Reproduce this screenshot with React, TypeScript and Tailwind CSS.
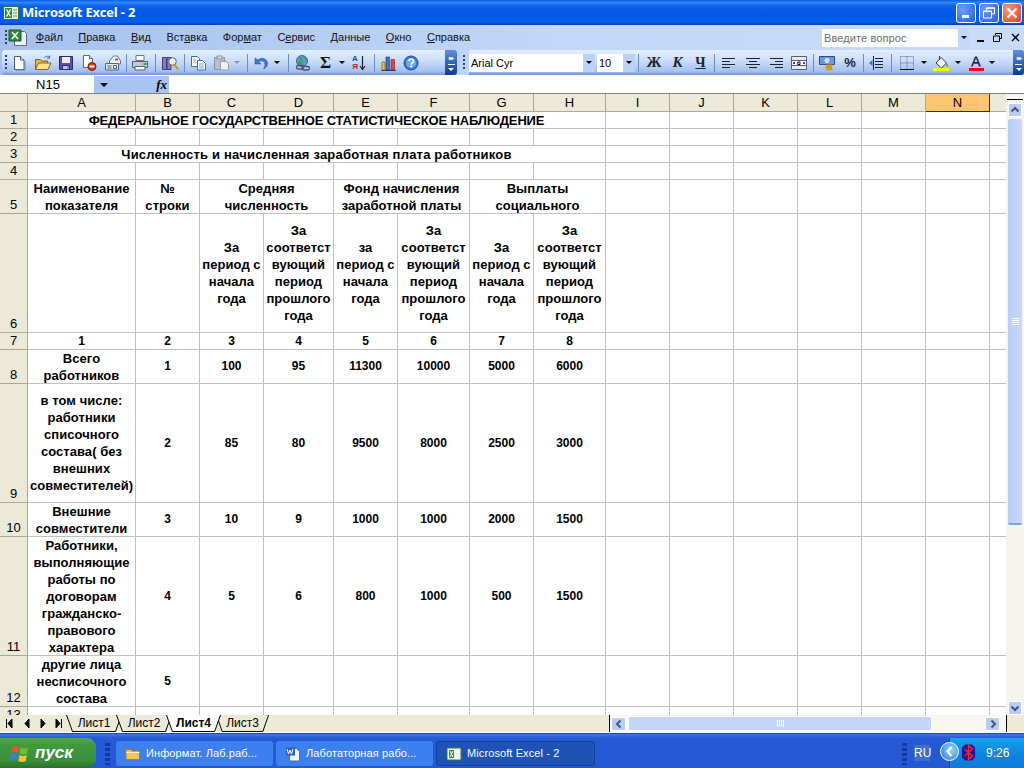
import type { ReactNode } from 'react';

const S = ({ children, w = 16 }: { children: ReactNode; w?: number }) => (
    <svg width={w} height="16" viewBox={`0 0 ${w} 16`} className="block shrink-0">{children}</svg>
);

const icons: Record<string, ReactNode> = {
    new: <S><path d="M3.500 1.500h6l3.500 3.500v9.500h-9.500z" fill="#fff" stroke="#4a5a78" /><path d="M9.500 1.500v3.500h3.500" fill="#dde6f5" stroke="#4a5a78" /><path d="M14 6v9H5" fill="none" stroke="#6f86b3" /></S>,
    open: <S w={18}><path d="M1.500 14.500v-10h5l1 1.500h6v8.500z" fill="#e8b74a" stroke="#8a6414" /><path d="M1.500 14.500l3-6.500h12.500l-3 6.500z" fill="#ffe08a" stroke="#8a6414" /><path d="M10 3c2-2.500 4-2 5.500-.5M15.500 .5v2.500h-2.500" fill="none" stroke="#3f6fb5" /></S>,
    save: <S><path d="M1.500 1.500h13v13h-13z" fill="#5a4fb0" stroke="#2a2870" /><path d="M4 2h8v6h-8z" fill="#e9ecf7" /><path d="M4.500 10.500h7v4h-7z" fill="#c6c9d8" stroke="#2a2870" /><path d="M9.500 11.500h1v2h-1z" fill="#2a2870" /></S>,
    perm: <S><path d="M2.500 .5h6l3 3v9h-9z" fill="#fff" stroke="#5a6a86" /><path d="M8.500 .5v3h3" fill="#dde6f5" stroke="#5a6a86" /><circle cx="11" cy="11.500" r="4" fill="#d8341c" stroke="#8a1a0c" /><path d="M8.500 10.500h5v2h-5z" fill="#fff" /></S>,
    mail: <S w={18}><path d="M5.500 6l4-5h4l3 5v3h-11z" fill="#eef1f7" stroke="#6a7488" /><path d="M11 3.500h3v2h-3z" fill="#d04a3a" /><path d="M1.500 8.500h13v6.500h-13z" fill="#dfe5ee" stroke="#5a6478" /><path d="M3.500 11h4M3.500 13h4M9.500 10.500h3v3h-3z" fill="none" stroke="#5a6478" /></S>,
    print: <S w={18}><path d="M5 .5h8v5h-8z" fill="#fff" stroke="#6a7488" /><path d="M1.500 6.500h15v6h-15z" fill="#c3c9d3" stroke="#5a6070" /><path d="M4 11.500h10v3.500h-10z" fill="#f4f5f7" stroke="#5a6070" /><path d="M12.500 8h3v2h-3z" fill="#26b04a" /></S>,
    research: <S w={18}><path d="M1.500 2.500h4v12h-4zM6 2.500h4v12h-4z" fill="#8a78c0" stroke="#453a7a" /><circle cx="11.500" cy="6.500" r="3.800" fill="#e7f3ff" stroke="#7a6a30" /><path d="M13.500 9.500l3.500 5" stroke="#c49420" strokeWidth="2" /></S>,
    copy: <S w={17}><path d="M1.500 1.500h6l2 2v8h-8z" fill="#fff" stroke="#3d6fb4" /><path d="M7.500 5.500h5l3 3v6.500h-8z" fill="#fff" stroke="#3d6fb4" /><path d="M9 9h5M9 11h5M9 13h5M3 5h3M3 7h3" stroke="#7ba3d8" /></S>,
    paste: <S w={17}><path d="M1.500 2.500h10v12h-10z" fill="#b9bfca" stroke="#8d94a3" /><path d="M4 1h5v3h-5z" fill="#d9dde4" stroke="#8d94a3" /><path d="M7.500 6.500h6l2 2v6.500h-8z" fill="#eef0f4" stroke="#9aa1ae" /></S>,
    undo: <S><path d="M2 3v6h6l-2.200-2.200c2.500-2 6-.8 6.200 3 .1 1.500-.6 3-1.500 4 3-1 4.500-3.300 4-6.300-.7-3.800-5.800-5.800-9.500-2.600z" fill="#3f78d4" stroke="#1e4a9a" strokeWidth=".5" /></S>,
    link: <S w={18}><circle cx="8" cy="6" r="5.500" fill="#5b9bd8" stroke="#35659c" /><path d="M5 3c2-1 3 1 2 2.500s-3 1-3 3c2 1 4 0 5-2M9 1.500c1 2 3 2 3.500 3.500" fill="#4fa84a" stroke="#3f8a3c" /><rect x="2.500" y="10.500" width="7" height="3.500" rx="1.700" fill="none" stroke="#4a5470" strokeWidth="1.300" /><rect x="8" y="11.500" width="7.500" height="3.500" rx="1.700" fill="none" stroke="#4a5470" strokeWidth="1.300" /></S>,
    chart: <S w={17}><path d="M1.500 15.500h14.500" stroke="#2a3a6a" /><path d="M2 7h3v8h-3z" fill="#f1c232" stroke="#6a5210" strokeWidth=".6" /><path d="M6 2h3.500v13h-3.500z" fill="#3f6fd1" stroke="#1a327a" strokeWidth=".6" /><path d="M11 4.500h3.500v10.500h-3.500z" fill="#e0453a" stroke="#7a1a12" strokeWidth=".6" /></S>,
    help: <S><circle cx="8" cy="8" r="7" fill="#3a76d6" stroke="#1f4a9c" /><circle cx="8" cy="8" r="5" fill="#6ea6ee" /><path d="M5.800 6.200c.3-2.600 4.700-2.600 4.700 0 0 1.800-2.300 1.600-2.300 3.300" fill="none" stroke="#fff" strokeWidth="1.700" /><path d="M7.300 10.500h1.900v1.800h-1.900z" fill="#fff" /></S>,
    left: <S><path d="M1 3.500h13M1 6.500h8M1 9.500h13M1 12.500h8" stroke="#1c2433" /></S>,
    center: <S><path d="M1 3.500h14M4 6.500h8M1 9.500h14M4 12.500h8" stroke="#1c2433" /></S>,
    right: <S><path d="M2 3.500h13M7 6.500h8M2 9.500h13M7 12.500h8" stroke="#1c2433" /></S>,
    merge: <S><path d="M.5 1.500h15v13h-15z" fill="#e6eaf2" stroke="#53617e" /><path d="M.5 5.500h15M.5 10.500h15" stroke="#53617e" /><path d="M1.500 6h13v4h-13z" fill="#fff" /><path d="M2 8h2M14 8h-2M3.500 7l-1 1 1 1M12.500 7l1 1-1 1" fill="none" stroke="#111" /><path d="M6.800 7h2.200v2.500h-2.200z" fill="none" stroke="#111" /></S>,
    currency: <S w={17}><path d="M.5 1.500h15v8h-15z" fill="#6f97d6" stroke="#2d4a86" /><circle cx="8" cy="5.500" r="2.500" fill="#cfe0f7" /><path d="M7.500 10.500h6M6 12.500h7M7.500 14.500h6" stroke="#d59a16" strokeWidth="2" /></S>,
    indent: <S><path d="M7 3.500h8M7 6.500h8M7 9.500h8M7 12.500h8M5.500 1v14" stroke="#1c2433" /><path d="M1 8l3.500-3v6z" fill="#3a6fc8" /></S>,
    borders: <S><path d="M1.500 1.500h13v13h-13zM8 1.500v13M1.500 8h13" fill="none" stroke="#5a6a86" strokeDasharray="1 1" /><path d="M1 14.500h14" stroke="#111" /></S>,
    fill: <S><path d="M3 8l5-5.500 5.500 5.500-5 5z" fill="#f4f6fa" stroke="#333c55" /><path d="M13.500 8c1 1.500 1.500 2.300 1.500 3 0 1-1.500 1-1.500 0z" fill="#666" /><path d="M6.500 1v4" stroke="#333c55" /><path d="M0 13h16v3h-16z" fill="#ffff00" /></S>,
    color: <S><path d="M1 16v-3h15v3z" fill="#ff0000" /><path d="M3 11.500l4-10h2l4 10h-2l-1-2.800h-4.200l-1 2.800zM6.500 7h3l-1.500-3.800z" fill="#1f2b55" fillRule="evenodd" /></S>,
};

const Grip = () => (
    <div className="w-[2px] h-[15px] bg-[repeating-linear-gradient(180deg,#27417b_0px,#27417b_2px,transparent_2px,transparent_4px)] shrink-0" />
);

const Sep = ({ w }: { w: string }) => (
    <div className={`${w} h-[18px] flex justify-center shrink-0`}>
        <div className="w-px h-full bg-[#6a8cc9]" />
    </div>
);

const Arrow = ({ w, light }: { w: string; light?: boolean }) => (
    <div className={`${w} flex justify-center shrink-0`}>
        <div className={`border-x-[3px] border-t-[3px] border-x-transparent ${light ? 'border-t-[#8d94a3]' : 'border-t-black'}`} />
    </div>
);

const Btn = ({ w, children }: { w: string; children: ReactNode }) => (
    <div className={`${w} h-[22px] flex items-center justify-center shrink-0`}>{children}</div>
);

const Chevron = ({ className }: { className: string }) => (
    <div className={`${className} h-[25px] rounded-r-[3px] bg-[linear-gradient(180deg,#5f8fdc,#0e3a94)] flex flex-col items-center justify-center gap-[3px] shrink-0`}>
        <span className="text-white text-[6px] leading-[6px] tracking-[-1px] font-bold">▸▸</span>
        <span className="w-[7px] border-t border-white" />
        <span className="border-x-[3px] border-t-[3px] border-x-transparent border-t-white" />
    </div>
);

const toolbarBg = 'bg-[linear-gradient(180deg,#e3efff_0%,#c8dcf9_45%,#a6c1ee_85%,#6d92d2_100%)]';

const MENU: [string, string, string][] = [
    ['', 'Ф', 'айл'],
    ['', 'П', 'равка'],
    ['', 'В', 'ид'],
    ['Вст', 'а', 'вка'],
    ['Фор', 'м', 'ат'],
    ['С', 'е', 'рвис'],
    ['', 'Д', 'анные'],
    ['', 'О', 'кно'],
    ['', 'С', 'правка'],
];

const COLS = ['A', 'B', 'C', 'D', 'E', 'F', 'G', 'H', 'I', 'J', 'K', 'L', 'M', 'N'];

type C = { t?: string; wide?: boolean };

const cellsFor = (vals: string[]): C[] => vals.map(t => ({ t }));

// A..H only, I..N get added while rendering
const ROWS: { n: number; cells: C[]; big?: 'title' | 'sub' | 'group' }[] = [
    { n: 1, big: 'title', cells: [{ t: 'ФЕДЕРАЛЬНОЕ ГОСУДАРСТВЕННОЕ СТАТИСТИЧЕСКОЕ НАБЛЮДЕНИЕ' }] },
    { n: 2, cells: cellsFor(['', '', '', '', '', '', '', '']) },
    { n: 3, big: 'sub', cells: [{ t: 'Численность и начисленная заработная плата работников' }] },
    { n: 4, cells: cellsFor(['', '', '', '', '', '', '', '']) },
    {
        n: 5, big: 'group', cells: [
            { t: 'Наименование\nпоказателя' }, { t: '№\nстроки' },
            { t: 'Средняя\nчисленность', wide: true },
            { t: 'Фонд начисления\nзаработной платы', wide: true },
            { t: 'Выплаты\nсоциального', wide: true },
        ],
    },
    {
        n: 6, cells: cellsFor(['', '',
            'За\nпериод с\nначала\nгода',
            'За\nсоответст\nвующий\nпериод\nпрошлого\nгода',
            'за\nпериод с\nначала\nгода',
            'За\nсоответст\nвующий\nпериод\nпрошлого\nгода',
            'За\nпериод с\nначала\nгода',
            'За\nсоответст\nвующий\nпериод\nпрошлого\nгода']),
    },
    { n: 7, cells: cellsFor(['1', '2', '3', '4', '5', '6', '7', '8']) },
    { n: 8, cells: cellsFor(['Всего\nработников', '1', '100', '95', '11300', '10000', '5000', '6000']) },
    { n: 9, cells: cellsFor(['в том числе:\nработники\nсписочного\nсостава( без\nвнешних\nсовместителей)', '2', '85', '80', '9500', '8000', '2500', '3000']) },
    { n: 10, cells: cellsFor(['Внешние\nсовместители', '3', '10', '9', '1000', '1000', '2000', '1500']) },
    { n: 11, cells: cellsFor(['Работники,\nвыполняющие\nработы по\nдоговорам\nгражданско-\nправового\nхарактера', '4', '5', '6', '800', '1000', '500', '1500']) },
    { n: 12, cells: cellsFor(['другие лица\nнесписочного\nсостава', '5', '', '', '', '', '', '']) },
    { n: 13, cells: cellsFor(['', '', '', '', '', '', '', '']) },
];

const cellBase = 'border-r border-b border-[#c0c0c0] flex flex-col items-center justify-center text-center font-bold text-black overflow-hidden whitespace-nowrap';

const Lines = ({ t }: { t?: string }) => (
    <>{t ? t.split('\n').map((l, i) => <span key={i}>{l}</span>) : null}</>
);

function cellType(big: string | undefined, t?: string) {
    if (big === 'title') return 'col-span-8 tracking-[-0.15px]';
    if (big === 'sub') return 'col-span-8 tracking-[0.2px]';
    if (t && /^\d+$/.test(t)) return 'text-[12px]';
    return 'tracking-[0.05px]';
}

function Sheet() {
    return (
        <div className="h-[621px] w-[1006px] overflow-hidden grid grid-cols-[28px_108px_64px_64px_70px_64px_72px_64px_72px_64px_64px_64px_64px_64px_64px_16px] grid-rows-[18px_17px_17px_17px_17px_34px_119px_17px_34px_119px_34px_119px_51px_17px] text-[13px] leading-[17px] font-['Liberation_Sans',sans-serif]">
            <div className="bg-[#ece9d8] border-r border-b border-[#aca899]" />
            {COLS.map(c => (
                <div key={c} className={c === 'N'
                    ? 'bg-[#ffc66f] border-r border-b border-[#1a2a7a] text-center'
                    : 'bg-[#ece9d8] border-r border-b border-[#aca899] text-center'}>{c}</div>
            ))}
            <div className="bg-[#ece9d8] border-b border-[#aca899]" />
            {ROWS.map(r => (
                <div key={r.n} className="contents">
                    <div className="bg-[#ece9d8] border-r border-b border-[#aca899] flex items-end justify-center">{r.n}</div>
                    {r.cells.map((c, i) => (
                        <div key={i} className={`${cellBase} ${cellType(r.big, c.t)} ${c.wide ? 'col-span-2' : ''}`}>
                            <Lines t={c.t} />
                        </div>
                    ))}
                    {[0, 1, 2, 3, 4, 5].map(i => <div key={i} className="border-r border-b border-[#c0c0c0]" />)}
                    <div className="border-b border-[#c0c0c0]" />
                </div>
            ))}
        </div>
    );
}

function Tab({ label, active, className }: { label: string; active?: boolean; className: string }) {
    return (
        <div className={`${className} relative h-[17px] flex items-center justify-center ${active ? 'z-10 font-bold' : ''}`}>
            <svg viewBox="0 0 56 17" preserveAspectRatio="none" className="absolute inset-0 w-full h-full">
                <path d="M0.500 0L6.500 16.500H49.500L55.500 0" fill={active ? '#fff' : '#ece9d8'} stroke="#000" strokeWidth="1" vectorEffect="non-scaling-stroke" />
            </svg>
            <span className="relative">{label}</span>
        </div>
    );
}

function Bottom() {
    return (
        <div className="h-[17px] flex bg-[#ece9d8] text-[12px] leading-[17px] text-black font-['Liberation_Sans',sans-serif]">
            <div className="w-[66px] flex items-center shrink-0 pl-[6px]">
                <svg width="58" height="9" viewBox="0 0 58 9" className="block">
                    <path d="M0.500 0v9M6 0L2 4.500 6 9zM23 0l-4 4.500 4 4.500zM35 0l4 4.500-4 4.500zM50 0l4 4.500-4 4.500zM55.500 0v9" fill="#000" stroke="#000" strokeWidth="1" />
                </svg>
            </div>
            <div className="w-[543px] flex shrink-0">
                <Tab label="Лист1" className="w-[56px] -mr-[6px]" />
                <Tab label="Лист2" className="w-[56px] -mr-[6px]" />
                <Tab label="Лист4" active className="w-[55px] -mr-[5px]" />
                <Tab label="Лист3" className="w-[53px]" />
            </div>
            <div className="w-px bg-black shrink-0" />
            <div className="w-[396px] flex items-center bg-[#f7f6f1] px-px shrink-0">
                <ScrollBtn dir="left" />
                <div className="ml-[2px] w-[304px] h-[15px] rounded-[2px] border border-[#fff] bg-[linear-gradient(180deg,#c5d5f8,#c1d3f7)] flex items-center justify-center gap-px shrink-0">
                    {[0, 1, 2, 3].map(i => <span key={i} className="w-px h-[7px] bg-white" />)}
                </div>
                <div className="flex-1" />
                <ScrollBtn dir="right" />
                <div className="w-[5px]" />
            </div>
            <div className="w-px bg-black shrink-0" />
        </div>
    );
}

function ScrollBtn({ dir }: { dir: 'left' | 'right' | 'up' | 'down' }) {
    const d = { left: 'M6.500 1.500L3 5l3.500 3.500', right: 'M3.500 1.500L7 5 3.500 8.500', up: 'M1.500 6.500L5 3l3.500 3.500', down: 'M1.500 3.500L5 7l3.500-3.500' }[dir];
    const w = dir === 'up' || dir === 'down' ? 'w-[14px]' : 'w-[15px]';
    return (
        <div className={`${w} h-[14px] rounded-[2px] border border-[#fff] bg-[#b9cdf3] flex items-center justify-center shrink-0`}>
            <svg width="10" height="10" viewBox="0 0 10 10" className="block">
                <path d={d} fill="none" stroke="#41557f" strokeWidth="2" />
            </svg>
        </div>
    );
}

function VScroll() {
    return (
        <div className="w-[18px] h-[621px] flex flex-col bg-[#f5f4ef] shrink-0 pl-[2px] pr-[2px]">
            <div className="h-[6px] border-b border-black -mx-[1px]" />
            <div className="h-[3px]" />
            <ScrollBtn dir="up" />
            <div className="h-[2px]" />
            <div className="h-[406px] rounded-[2px] border-b-2 border-[#7fa2e0] bg-[linear-gradient(90deg,#b9cdf6,#c7d8fa)] flex flex-col items-center justify-center gap-px">
                {[0, 1, 2, 3].map(i => <span key={i} className="w-[7px] h-px bg-white" />)}
            </div>
            <div className="flex-1" />
            <ScrollBtn dir="down" />
        </div>
    );
}

function Taskbar() {
    const btn = 'h-[25px] rounded-[3px] flex items-center gap-[5px] pl-[9px] text-white text-[11px] tracking-[0.1px] shrink-0 font-[\'Liberation_Sans\',sans-serif]';
    return (
        <div className="h-[35px] flex items-end bg-[linear-gradient(180deg,#3b7ae0_0px,#2a63d8_3px,#2558d6_5px,#2459d4_100%)] border-t border-[#1f49ad]">
            <div className="w-[96px] h-[30px] rounded-r-[9px] bg-[linear-gradient(180deg,#5aa35a_0%,#3f9a3f_20%,#3a8f3a_75%,#2c6f2c_100%)] flex items-center pl-[10px] gap-[5px] shrink-0">
                <svg width="20" height="20" viewBox="0 0 20 20" className="block">
                    <path d="M2 4c2.500-1.300 5-1.300 7 0l-1 6c-2-1.200-4.500-1.200-7 0z" fill="#e8552c" />
                    <path d="M10.500 4.500c2.500 1.400 5 1.300 7.500 0l-1 6c-2.500 1.300-5 1.400-7.500 0z" fill="#6cbf3a" />
                    <path d="M1 11c2.500-1.200 5-1.200 7 0l-1 6c-2-1.200-4.500-1.200-7 0z" fill="#3a7fe0" />
                    <path d="M9.300 12c2.500 1.400 5 1.300 7.500 0l-1 6c-2.500 1.300-5 1.400-7.500 0z" fill="#f2c230" />
                </svg>
                <span className="text-white italic font-bold text-[17px] leading-[20px] font-['Liberation_Sans',sans-serif]">пуск</span>
            </div>
            <div className="w-[9px]" />
            <div className="w-[5px] h-[22px] mb-[3px] bg-[repeating-linear-gradient(180deg,#123a9e_0px,#123a9e_3px,transparent_3px,transparent_5px)] shrink-0" />
            <div className="w-[6px]" />
            <div className="flex items-center gap-[3px] mb-[2px]">
                <div className={`${btn} w-[157px] bg-[#3c80f0]`}>
                    <svg width="16" height="16" viewBox="0 0 16 16" className="block shrink-0"><path d="M1 13.500v-10h5l1 1.500h7.500v8.500z" fill="#f0c560" stroke="#a67c1e" /><path d="M1 6.500h13.500" stroke="#fff2c0" /></svg>
                    <span>Информат. Лаб.раб...</span>
                </div>
                <div className={`${btn} w-[157px] bg-[#3c80f0]`}>
                    <svg width="16" height="16" viewBox="0 0 16 16" className="block shrink-0"><path d="M4.500 2.500h7l3 3v9.500h-10z" fill="#f0f4fb" stroke="#5a6a96" /><path d="M1 1.500h9v8h-9z" fill="#2f5fc0" /><path d="M2 3l1.500 5 1.500-4 1.500 4 1.500-5" fill="none" stroke="#fff" /></svg>
                    <span>Лаботаторная рабо...</span>
                </div>
                <div className={`${btn} w-[159px] bg-[#1e52b7] border border-[#143f96]`}>
                    <svg width="16" height="16" viewBox="0 0 16 16" className="block shrink-0"><path d="M1 2h14v12h-14z" fill="#eef4ea" stroke="#3c7a3c" /><path d="M3 4h5v8h-5z" fill="#2d8a3e" /><path d="M4 5l3 6M7 5l-3 6" stroke="#fff" /></svg>
                    <span>Microsoft Excel - 2</span>
                </div>
            </div>
            <div className="flex-1" />
            <div className="w-[5px] h-[22px] mb-[3px] bg-[repeating-linear-gradient(180deg,#123a9e_0px,#123a9e_3px,transparent_3px,transparent_5px)] shrink-0" />
            <div className="w-[7px]" />
            <div className="w-[16px] h-[16px] mb-[7px] bg-[#3f6fc8] text-white text-[12px] leading-[16px] text-center font-['Liberation_Sans',sans-serif] shrink-0">RU</div>
            <div className="w-[19px]" />
            <div className="relative w-[75px] h-[30px] bg-[linear-gradient(180deg,#17a3ef,#0f86e0_50%,#0f7bd8)] border-l border-[#0a4fb0] flex items-center shrink-0">
                <div className="absolute -left-[10px] top-[4px] w-[19px] h-[19px] rounded-full bg-[radial-gradient(circle_at_60%_40%,#9fd4fb,#1c76da)] border border-white flex items-center justify-center">
                    <svg width="9" height="11" viewBox="0 0 9 11" className="block"><path d="M6.500 1L2.500 5.500 6.500 10" fill="none" stroke="#fff" strokeWidth="2.200" /></svg>
                </div>
                <div className="w-[12px]" />
                <svg width="13" height="17" viewBox="0 0 13 17" className="block shrink-0 mb-[2px]"><path d="M3 .5h7l3 3v10l-3 3h-7l-3-3v-10z" fill="#1b1b9a" /><path d="M2.500 5l8 7-4 3.500v-14l4 3.500-8 7" fill="none" stroke="#ff2020" strokeWidth="1.400" /></svg>
                <div className="w-[11px]" />
                <span className="text-white text-[12px] font-['Liberation_Sans',sans-serif]">9:26</span>
            </div>
        </div>
    );
}

export default function App() {
    return (
        <div className="w-[1024px] h-[768px] overflow-hidden flex flex-col bg-white font-['Liberation_Sans',sans-serif] text-black">
            {/* title bar */}
            <div className="h-[25px] flex items-center bg-[linear-gradient(180deg,#0a5ee0_0%,#2f86f8_10%,#0c60ea_24%,#0058e6_60%,#0a60ee_86%,#0042b8_100%)] shrink-0">
                <svg width="16" height="16" viewBox="0 0 16 16" className="block ml-[3px] shrink-0">
                    <path d="M.5 1.500h15v13h-15z" fill="#e6f2df" stroke="#356f35" />
                    <path d="M2 3h7v10h-7z" fill="#2d8a3e" />
                    <path d="M3.500 4.500l4 7M7.500 4.500l-4 7" stroke="#fff" strokeWidth="1.300" />
                    <path d="M10 5h4M10 8h4M10 11h4" stroke="#5aa05a" />
                </svg>
                <span className="ml-[3px] text-white text-[13px] font-bold tracking-[-0.2px] font-['Open_Sans',sans-serif]">Microsoft Excel - 2</span>
                <div className="flex-1" />
                <div className="flex gap-[3px] pr-[2px]">
                    <div className="w-[20px] h-[20px] rounded-[3px] border border-white bg-[radial-gradient(circle_at_30%_30%,#6d9bf8,#2a5fdc)] flex items-end pl-[5px] pb-[4px]"><span className="w-[7px] h-[3px] bg-white" /></div>
                    <div className="w-[20px] h-[20px] rounded-[3px] border border-white bg-[radial-gradient(circle_at_30%_30%,#6d9bf8,#2a5fdc)] flex items-center justify-center">
                        <svg width="12" height="12" viewBox="0 0 12 12" className="block"><path d="M3.500 3V.8h8v6H9M.5 4h8v7h-8z" fill="none" stroke="#fff" /><path d="M3.500 1.300h8M.5 4.500h8" stroke="#fff" /></svg>
                    </div>
                    <div className="w-[20px] h-[20px] rounded-[3px] border border-white bg-[radial-gradient(circle_at_30%_30%,#f09a7c,#d9431c)] flex items-center justify-center">
                        <svg width="12" height="12" viewBox="0 0 12 12" className="block"><path d="M1.500 1.500l9 9M10.500 1.500l-9 9" stroke="#fff" strokeWidth="2" /></svg>
                    </div>
                </div>
            </div>

            {/* menu */}
            <div className="h-[25px] flex items-center bg-[linear-gradient(90deg,#a5c0ee,#c2d8f8_55%,#c8dcfa)] shrink-0 text-[11px] text-[#111]">
                <div className="w-[5px]" />
                <Grip />
                <svg width="20" height="18" viewBox="0 0 20 18" className="block ml-[1px] shrink-0">
                    <path d="M6.500 2.500h10l2 2v12h-12z" fill="#eef1f7" stroke="#5a6a86" />
                    <path d="M1 1h12v11h-12z" fill="#2d8a3e" stroke="#1c5c28" />
                    <path d="M4 3l6 7M10 3l-6 7" stroke="#fff" strokeWidth="1.500" />
                </svg>
                {MENU.map(([a, u, b], i) => (
                    <span key={i} className="px-[7.75px] whitespace-nowrap">{a}<u>{u}</u>{b}</span>
                ))}
                <div className="flex-1" />
                <div className="w-[136px] h-[18px] bg-white text-[11px] leading-[18px] pl-[2px] text-[#6d6d6d] tracking-[0.1px] shrink-0">Введите вопрос</div>
                <div className="w-[12px] h-[18px] bg-[#c3d8f8] flex items-center justify-center shrink-0">
                    <span className="border-x-[3px] border-t-[3px] border-x-transparent border-t-black" />
                </div>
                <div className="w-[54px] flex items-center justify-around pl-[3px] pr-[0px] shrink-0">
                    <span className="w-[7px] h-[2px] bg-black mt-[6px]" />
                    <svg width="9" height="9" viewBox="0 0 9 9" className="block"><path d="M2.500 2V.5h6v5H7M.5 3h6v5.500h-6z" fill="none" stroke="#000" /></svg>
                    <svg width="9" height="9" viewBox="0 0 9 9" className="block"><path d="M1 1l7 7M8 1l-7 7" stroke="#000" strokeWidth="1.300" /></svg>
                </div>
            </div>

            {/* toolbars */}
            <div className="h-[25px] flex items-center bg-[linear-gradient(90deg,#a5c0ee,#c2d8f8_55%,#c8dcfa)] shrink-0">
                <div className={`ml-[2px] w-[443px] h-[25px] rounded-l-[3px] flex items-center pl-[3px] ${toolbarBg} shrink-0`}>
                    <Grip />
                    <Btn w="w-[24px]">{icons.new}</Btn>
                    <Btn w="w-[23px]">{icons.open}</Btn>
                    <Btn w="w-[23px]">{icons.save}</Btn>
                    <Btn w="w-[24px]">{icons.perm}</Btn>
                    <Btn w="w-[23px]">{icons.mail}</Btn>
                    <Sep w="w-[4px]" />
                    <Btn w="w-[24px]">{icons.print}</Btn>
                    <Sep w="w-[6px]" />
                    <Btn w="w-[23px]">{icons.research}</Btn>
                    <Sep w="w-[6px]" />
                    <Btn w="w-[23px]">{icons.copy}</Btn>
                    <Btn w="w-[22px]">{icons.paste}</Btn>
                    <Arrow w="w-[10px]" light />
                    <Sep w="w-[10px]" />
                    <Btn w="w-[18px]">{icons.undo}</Btn>
                    <Arrow w="w-[14px]" />
                    <Sep w="w-[8px]" />
                    <Btn w="w-[22px]">{icons.link}</Btn>
                    <Btn w="w-[23px]"><span className="text-[17px] font-bold text-[#111] font-['Liberation_Serif',serif]">Σ</span></Btn>
                    <Arrow w="w-[10px]" />
                    <Btn w="w-[24px]">
                        <div className="flex items-center gap-px">
                            <div className="flex flex-col text-[8px] leading-[8px] font-bold text-center"><span className="text-[#2a4a9a]">А</span><span className="text-[#c02020]">Я</span></div>
                            <svg width="7" height="16" viewBox="0 0 7 16" className="block"><path d="M3.500 1v13M1 11l2.500 3.500L6 11" fill="none" stroke="#1c2433" strokeWidth="1.200" /></svg>
                        </div>
                    </Btn>
                    <Sep w="w-[6px]" />
                    <Btn w="w-[22px]">{icons.chart}</Btn>
                    <Btn w="w-[24px]">{icons.help}</Btn>
                    <div className="flex-1" />
                </div>
                <Chevron className="w-[12px]" />
                <div className="w-[6px] shrink-0" />
                <Grip />
                <div className="w-[4px] shrink-0" />
                <div className={`w-[544px] h-[25px] flex items-center ${toolbarBg} shrink-0`}>
                    <div className="w-[114px] h-[18px] bg-white text-[11px] leading-[18px] pl-[2px] shrink-0">Arial Cyr</div>
                    <div className="w-[12px] h-[18px] bg-[#bcd2f5] flex items-center justify-center shrink-0">
                        <span className="border-x-[3px] border-t-[3px] border-x-transparent border-t-black" />
                    </div>
                    <div className="w-[2px]" />
                    <div className="w-[26px] h-[18px] bg-white text-[11px] leading-[18px] pl-[2px] shrink-0">10</div>
                    <div className="w-[12px] h-[18px] bg-[#bcd2f5] flex items-center justify-center shrink-0">
                        <span className="border-x-[3px] border-t-[3px] border-x-transparent border-t-black" />
                    </div>
                    <Sep w="w-[7px]" />
                    <Btn w="w-[24px]"><span className="text-[15px] font-bold text-[#1c2433] font-['Liberation_Serif',serif]">Ж</span></Btn>
                    <Btn w="w-[23px]"><span className="text-[15px] font-bold italic text-[#1c2433] font-['Liberation_Serif',serif]">К</span></Btn>
                    <Btn w="w-[23px]"><span className="text-[14px] font-bold underline text-[#1c2433] font-['Liberation_Serif',serif]">Ч</span></Btn>
                    <Sep w="w-[5px]" />
                    <Btn w="w-[24px]">{icons.left}</Btn>
                    <Btn w="w-[23px]">{icons.center}</Btn>
                    <Btn w="w-[23px]">{icons.right}</Btn>
                    <Btn w="w-[24px]">{icons.merge}</Btn>
                    <Sep w="w-[4px]" />
                    <Btn w="w-[24px]">{icons.currency}</Btn>
                    <Btn w="w-[22px]"><span className="text-[13px] font-bold text-[#1c2433]">%</span></Btn>
                    <Sep w="w-[4px]" />
                    <Btn w="w-[22px]">{icons.indent}</Btn>
                    <Sep w="w-[8px]" />
                    <Btn w="w-[24px]">{icons.borders}</Btn>
                    <Arrow w="w-[10px]" />
                    <Btn w="w-[24px]">{icons.fill}</Btn>
                    <Arrow w="w-[10px]" />
                    <Btn w="w-[25px]">{icons.color}</Btn>
                    <Arrow w="w-[8px]" />
                    <div className="flex-1" />
                </div>
                <Chevron className="w-[11px]" />
            </div>

            <div className="h-px shrink-0" />

            {/* formula bar */}
            <div className="h-[17px] flex bg-white shrink-0">
                <div className="w-[2px]" />
                <div className="w-[92px] text-center text-[13px] leading-[17px]">N15</div>
                <div className="w-[75px] bg-[#a8c4f0] flex items-center">
                    <span className="ml-[6px] border-x-[4px] border-t-[4px] border-x-transparent border-t-black" />
                    <div className="flex-1" />
                    <span className="mr-[2px] text-[13px] italic font-bold font-['Liberation_Serif',serif]">fx</span>
                </div>
            </div>
            <div className="h-px bg-[#808080] shrink-0" />

            {/* sheet */}
            <div className="flex shrink-0">
                <Sheet />
                <VScroll />
            </div>
            <Bottom />
            <div className="h-px bg-white shrink-0" />
            <Taskbar />
        </div>
    );
}
